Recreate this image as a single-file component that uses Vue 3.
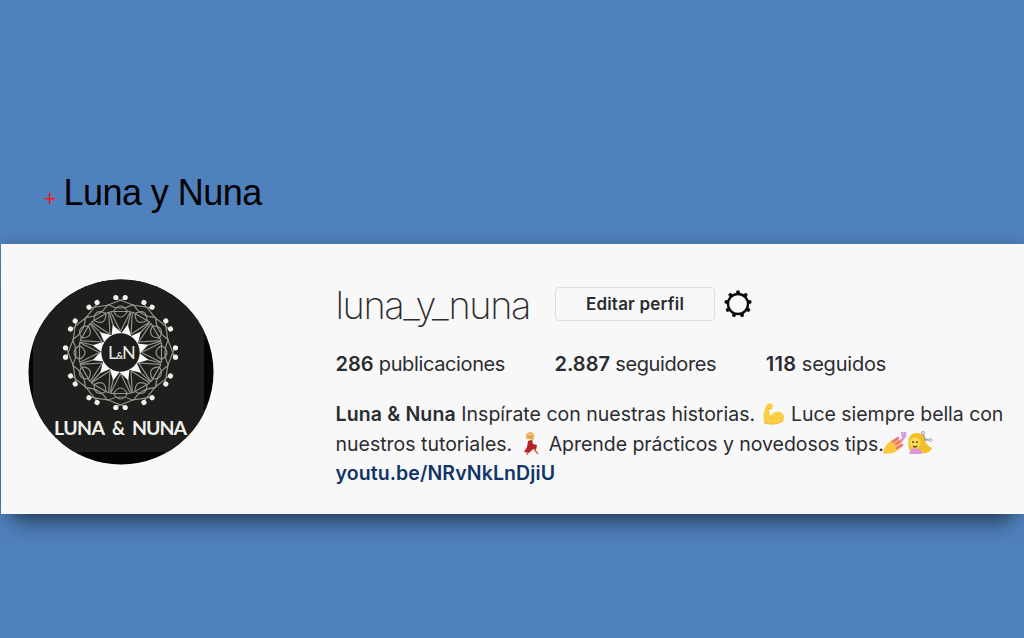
<template>
  <main class="slide">
    <!-- title -->
    <h1 class="title"><span class="bullet">+</span>Luna y Nuna</h1>

    <!-- profile -->
    <section class="profile">
      <svg class="avatar" viewBox="0 0 186 186">
        <defs>
          <clipPath id="round"><circle cx="93" cy="93" r="92.5" /></clipPath>
        </defs>
        <g clip-path="url(#round)">
          <rect width="186" height="186" fill="#050505" />
          <rect x="5" width="171" height="173" fill="#1e1e1c" />
        </g>
        <g transform="translate(92.5 73.5)">
          <g v-for="angle in angles" :key="angle" :transform="`rotate(${angle})`">
            <path class="lace" d="M0 -21L-10 -41M0 -21L10 -41M-10 -41H10M-7 -41Q0 -52 7 -41Q0 -30 -7 -41" />
            <path class="lace" d="M-13 -48Q0 -41 13 -48M-4.7 -54Q4 -51 13.5 -47M4.7 -54Q-4 -51 -13.5 -47" />
            <path class="lace" d="M7 -26L10.5 -41" />
            <circle cx="-4.7" cy="-55" r="2.6" fill="#f1f1ed" />
            <circle cx="4.7" cy="-55" r="2.6" fill="#f1f1ed" />
            <path d="M0.6 -19L7.2 -28L11 -15.5Z" fill="#fafafa" />
          </g>
          <circle r="19.2" fill="#1e1e1c" />
          <text class="mark" x="-12.5" y="6.5">L</text>
          <text class="mark mark-small" x="-4" y="6.5">&amp;</text>
          <text class="mark" x="1.5" y="6.5">N</text>
        </g>
        <g class="logo-text">
          <text x="26" y="156" textLength="51">LUNA</text>
          <text x="84" y="156" textLength="13" lengthAdjust="spacingAndGlyphs">&amp;</text>
          <text x="104" y="156" textLength="55">NUNA</text>
        </g>
      </svg>

      <div class="info">
        <div class="user-row">
          <span class="username">luna_y_nuna</span>
          <button class="edit">Editar perfil</button>
          <svg class="gear" viewBox="-14 -14 28 28">
            <circle r="10" fill="none" stroke="#0b0b0b" stroke-width="2.3" />
            <path v-for="n in 9" :key="n" d="M-2.2 -10L-1.4 -13.6H1.4L2.2 -10Z" fill="#0b0b0b" :transform="`rotate(${n * 40})`" />
          </svg>
        </div>

        <div class="stats">
          <span v-for="stat in stats" :key="stat.label" class="stat"><b>{{ stat.count }}</b> {{ stat.label }}</span>
        </div>

        <div class="bio">
          <div class="line">
            <span class="seg-a"><b>Luna &amp; Nuna</b> Inspírate con nuestras historias.</span>
            <svg class="emoji arm" viewBox="0 0 24 24">
              <path d="M5 2Q9 0 11 3L10 7L7 8L8 14Q15 7 20 11Q24 15 21 19Q13 24 2 21Q0 12 5 2Z" fill="#fbcf45" />
              <path d="M2 21Q13 24 21 19M8 14L10 17M6 6L9 7" fill="none" stroke="#efb545" stroke-width="1" />
            </svg>
            <span class="seg-b">Luce siempre bella con</span>
          </div>
          <div class="line">
            <span class="seg-c">nuestros tutoriales.</span>
            <svg class="emoji dancer" viewBox="0 0 20 24">
              <path d="M5 7Q4 1 9 1Q13 3 10 8L7 10" fill="none" stroke="#eab354" stroke-width="2" />
              <circle cx="8" cy="5" r="2.3" fill="#e6a04f" />
              <path d="M6 9L10 8L11 12L15 13L14 18L11 17L7 21L2 20L5 15Z" fill="#b91f27" />
              <path d="M12 17L16 22M6 20L5 23" stroke="#cf7540" stroke-width="1.6" />
            </svg>
            <span class="seg-d">Aprende prácticos y novedosos tips.</span>
            <svg class="emoji nails" viewBox="0 0 24 24">
              <path d="M0 22Q1 14 9 9L15 6L16 9L20 8L18 13L20 15L14 20Q8 24 0 22Z" fill="#fbc73e" />
              <path d="M10 11L15 7M13 13L19 9M14 17L19 14" stroke="#ed718f" stroke-width="2.5" stroke-linecap="round" />
              <path d="M18 10L22 5V1M20 6L19 1" fill="none" stroke="#d69adb" stroke-width="2.4" />
            </svg>
            <svg class="emoji haircut" viewBox="0 0 26 24">
              <path d="M2 18Q-1 2 10 2Q18 2 18 10Q20 15 25 17Q23 23 15 22L4 20Z" fill="#f3bf29" />
              <path d="M2 23Q3 17 9 17Q14 18 15 23Z" fill="#dc94d9" />
              <circle cx="8" cy="12" r="5.5" fill="#fddb59" />
              <path d="M6 10V12M10 10V12M6 15Q8 17 10 15" fill="none" stroke="#70451c" stroke-width="1.5" />
              <path d="M16 3L19 10M17 8L22 9" stroke="#9ba2a6" stroke-width="1.3" />
              <circle cx="16" cy="2" r="1.5" fill="none" stroke="#9ba2a6" />
              <circle cx="23.5" cy="9" r="1.5" fill="none" stroke="#9ba2a6" />
            </svg>
          </div>
          <div class="line"><a class="link">youtu.be/NRvNkLnDjiU</a></div>
        </div>
      </div>
    </section>
  </main>
</template>

<script setup>
// logo
const angles = Array.from({ length: 12 }, (_, index) => index * 30);

// stats
const stats = [
  { count: "286", label: "publicaciones" },
  { count: "2.887", label: "seguidores" },
  { count: "118", label: "seguidos" },
];
</script>

<style>
body {
  margin: 0;
  background-color: #4f81bd;
  overflow: hidden;
}
</style>

<style scoped>
.slide {
  height: 638px;
  box-sizing: border-box;
  padding-top: 168px;
  overflow: hidden;
  background-color: #4f81bd;
}

/* title */
.title {
  height: 76px;
  margin: 0;
  padding: 1px 0 0 43.5px;
  box-sizing: border-box;
  font: 400 36px/48px "Liberation Sans", Arial, sans-serif;
  letter-spacing: -0.55px;
  color: #000;
  white-space: nowrap;
}
.bullet {
  display: inline-block;
  width: 20px;
  color: #f01822;
  font-size: 22px;
  line-height: 22px;
  vertical-align: -1px;
}

/* profile */
.profile {
  display: flex;
  height: 270px;
  margin-left: 1px;
  padding: 35px 0 0 26.5px;
  box-sizing: border-box;
  background-color: #f8f8f8;
  box-shadow: 0 22px 20px -13px rgba(0, 0, 0, 0.46), 0 0 14px -2px rgba(0, 0, 0, 0.24);
  font-family: Inter, "Liberation Sans", sans-serif;
  color: #2b2c30;
}
.avatar {
  flex: none;
  width: 186px;
  height: 186px;
}
.lace {
  fill: none;
  stroke: #96968f;
  stroke-width: 1.15;
}
.mark {
  fill: #e9e9e5;
  font: 400 18px Lato, sans-serif;
}
.mark-small {
  font-size: 9px;
  font-weight: 700;
}
.logo-text {
  fill: #f0f0ed;
  font: 700 19.5px Lato, sans-serif;
}
.info {
  margin-left: 122px;
  white-space: nowrap;
}

/* user */
.user-row {
  display: flex;
  align-items: center;
  height: 50px;
}
.username {
  width: 219.5px;
  padding-top: 1px;
  box-sizing: border-box;
  font-size: 38px;
  font-weight: 250;
  letter-spacing: -1.45px;
}
.edit {
  width: 160px;
  height: 34px;
  padding: 0;
  border: 1px solid #dcdddf;
  border-radius: 4px;
  background: transparent;
  color: #2b2c30;
  font: 600 17px Inter, sans-serif;
  letter-spacing: 0.2px;
}
.gear {
  width: 28px;
  height: 28px;
  margin-left: 9px;
}

/* stats */
.stats {
  display: flex;
  gap: 49.5px;
  margin-top: 21px;
  font-size: 20px;
  line-height: 28px;
  letter-spacing: -0.38px;
}
.stat b {
  letter-spacing: 0;
}
.stat:nth-child(3) {
  letter-spacing: -0.2px;
}
.stat:nth-child(3) b {
  letter-spacing: 0.3px;
}
b {
  font-weight: 600;
}

/* bio */
.bio {
  margin-top: 22px;
  font-size: 19.5px;
  line-height: 29.5px;
}
.line {
  display: flex;
  align-items: center;
  height: 29.5px;
}
.line b {
  letter-spacing: 0.15px;
}
.seg-b {
  letter-spacing: -0.05px;
}
.seg-d {
  letter-spacing: -0.05px;
}
.emoji {
  flex: none;
  height: 24px;
}
.arm {
  width: 24px;
  margin: -2px 5px 0 7px;
}
.dancer {
  width: 20px;
  margin: 0 6.5px 0 10px;
}
.nails {
  width: 24px;
  margin-top: -3px;
  margin-left: -1px;
}
.haircut {
  width: 26px;
  margin-top: -3px;
}
.link {
  color: #123567;
  font-weight: 600;
  letter-spacing: 0.1px;
}
</style>
